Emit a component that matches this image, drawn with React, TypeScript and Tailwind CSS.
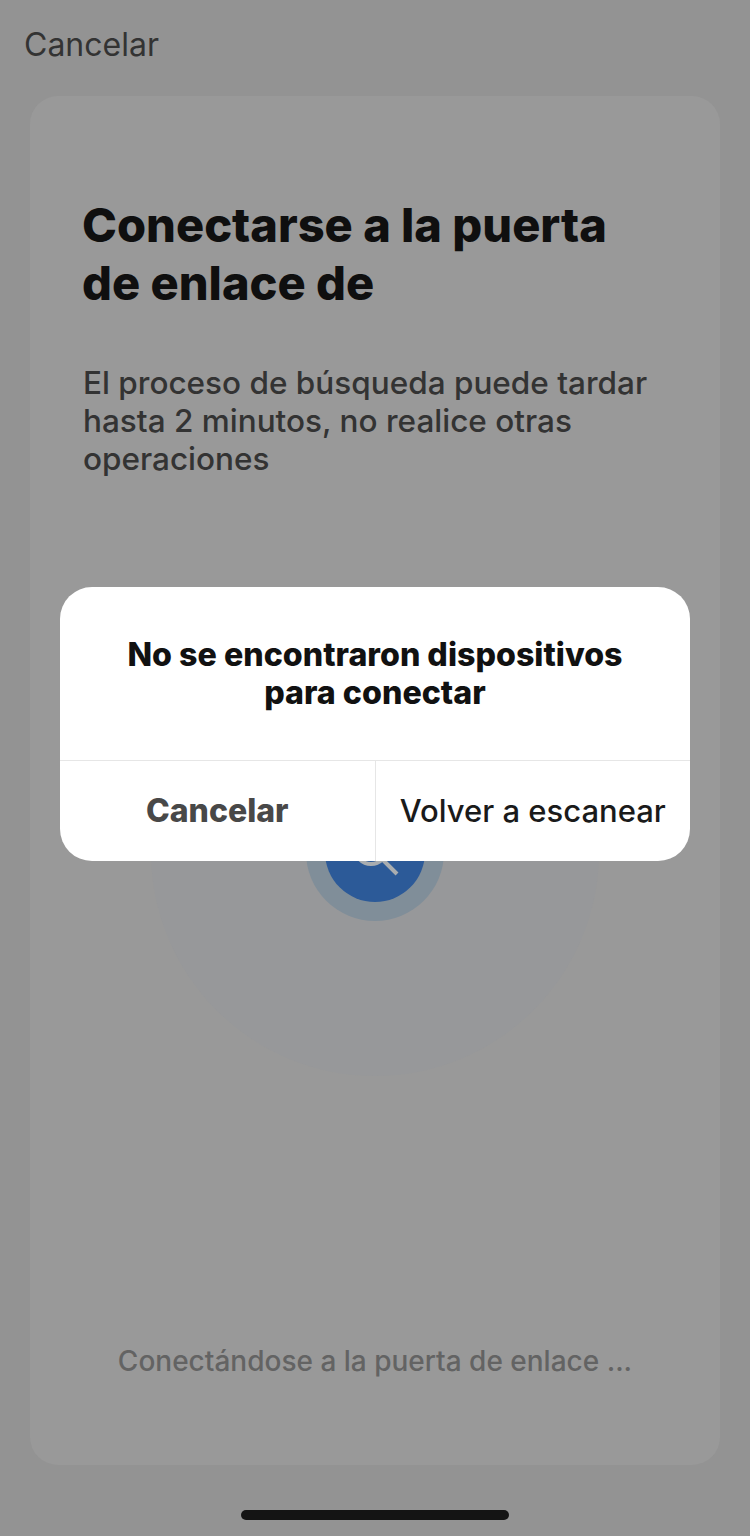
export default function App() {
  return (
    <div className="relative flex h-[1536px] w-[750px] flex-col overflow-hidden bg-[#939393] font-['Inter',sans-serif]">
      {/* Top bar */}
      <div className="flex h-[96px] items-start px-[24px] pt-[26px]">
        <span className="text-[32px] leading-[38px] text-[#333333]">Cancelar</span>
      </div>

      {/* Card */}
      <div className="mx-[30px] flex h-[1369px] flex-col rounded-[28px] bg-[#999999] px-[52px] pt-[100px]">
        <h1 className="whitespace-nowrap text-[47px] font-extrabold leading-[58px] text-[#0f0f0f]">
          Conectarse a la puerta
          <br />
          de enlace de
        </h1>
        <p className="ml-px mt-[52px] whitespace-nowrap text-[31.5px] font-medium leading-[38px] text-[#333333]">
          El proceso de búsqueda puede tardar
          <br />
          hasta 2 minutos, no realice otras
          <br />
          operaciones
        </p>

        {/* Radar */}
        <div className="mt-[150px] flex justify-center">
          <div className="flex h-[448px] w-[448px] shrink-0 items-center justify-center rounded-full bg-[#97989a]">
            <div className="flex h-[138px] w-[138px] items-center justify-center rounded-full bg-[#808e99]">
              <div className="flex h-[100px] w-[100px] items-center justify-center rounded-full bg-[#2c5a98]">
                <svg width="60" height="60" viewBox="0 0 60 60" fill="none" stroke="#a9adb0" strokeWidth="4">
                  <circle cx="26" cy="26" r="16" />
                  <path d="M38 38L52 52" />
                </svg>
              </div>
            </div>
          </div>
        </div>

        <p className="mt-[267px] whitespace-nowrap text-center text-[28px] font-medium leading-[36px] text-[#636363]">
          Conectándose a la puerta de enlace ...
        </p>
      </div>

      {/* Home indicator */}
      <div className="mx-auto mt-[45px] h-[10px] w-[268px] rounded-full bg-[#141414]" />

      {/* Dialog */}
      <div className="absolute left-[60px] top-[587px] w-[630px] overflow-hidden rounded-[32px] bg-white">
        <div className="flex h-[173px] items-start justify-center pt-[49px] text-center text-[32.2px] font-extrabold leading-[38px] text-[#111111]">
          <p>
            No se encontraron dispositivos
            <br />
            para conectar
          </p>
        </div>
        <div className="flex h-[101px] border-t border-[#e6e6e6]">
          <div className="flex flex-1 items-center justify-center border-r border-[#e6e6e6] text-[32px] font-extrabold text-[#484848]">
            Cancelar
          </div>
          <div className="flex flex-1 items-center justify-center whitespace-nowrap text-[31px] font-medium text-[#1a1a1a]">
            Volver a escanear
          </div>
        </div>
      </div>
    </div>
  );
}
